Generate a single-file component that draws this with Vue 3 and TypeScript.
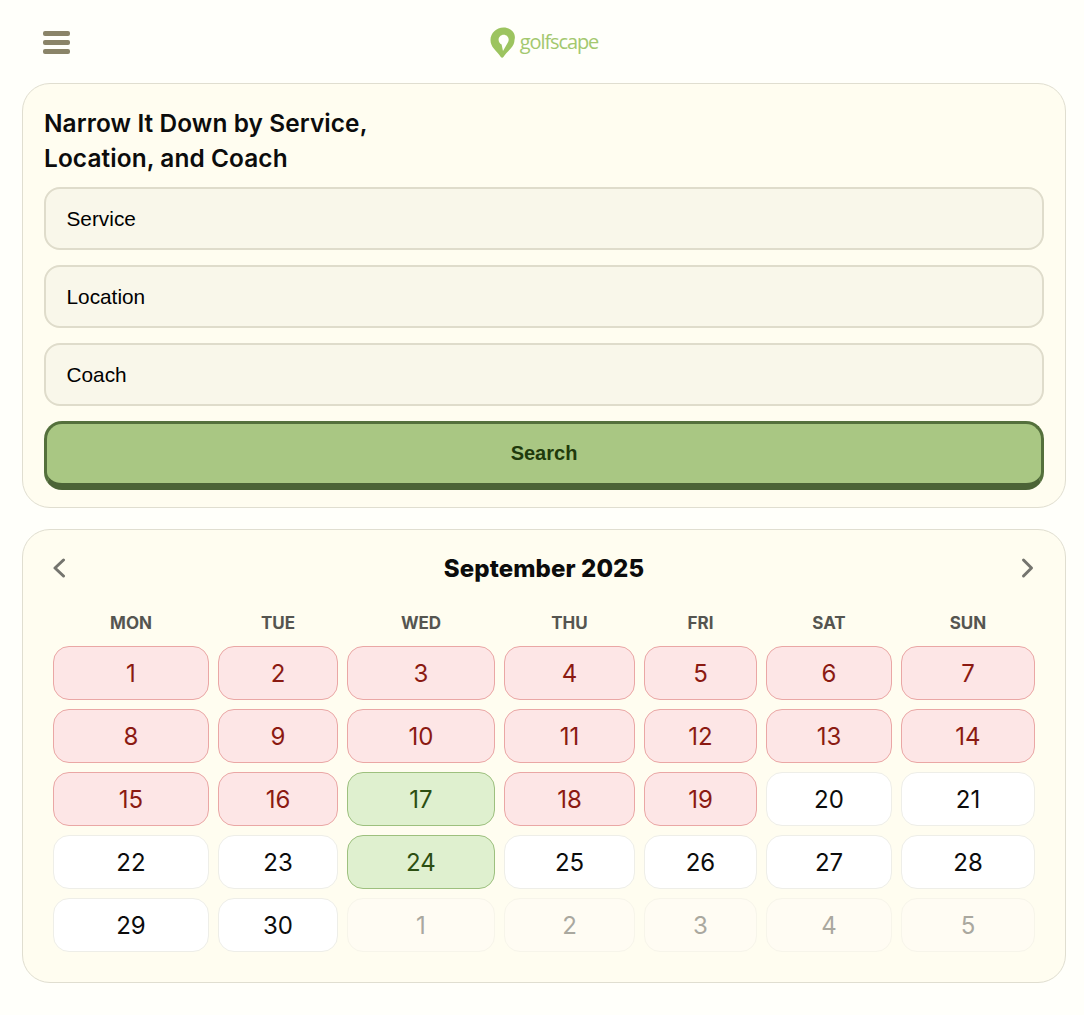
<template>
  <div class="page">
    <header class="topbar">
      <button class="menu" type="button" aria-label="Menu">
        <span></span><span></span><span></span>
      </button>
      <div class="logo">
        <svg class="logo__pin" viewBox="0 0 27 31" width="27" height="31" aria-hidden="true">
          <path
            fill="#9cc45f"
            fill-rule="evenodd"
            d="M13.500 0.500C6.300 0.500 0.500 6.100 0.500 13c0 3.300 1.300 6.100 3.300 8.600 2.500 3 5 5.300 7 8.300.7 1 2 1 2.600 0 2-3 4.700-5.500 7.300-8.500 2.400-2.700 3.800-5.200 3.800-8.400C26.500 6.100 20.700.5 13.500.5ZM13.700 7.800c2.800 0 5 2.200 5 4.900 0 .9-.3 1.800-.7 2.500l-5 8.800-1.400-6.600c-1.800-.8-3-2.600-3-4.700 0-2.700 2.300-4.900 5.100-4.900Z"
          />
        </svg>
        <span class="logo__text">golfscape</span>
      </div>
    </header>

    <section class="card filter">
      <h2 class="filter__title">Narrow It Down by Service,<br />Location, and Coach</h2>
      <div class="filter__fields">
        <div v-for="field in fields" :key="field" class="field">{{ field }}</div>
        <button class="search" type="button">Search</button>
      </div>
    </section>

    <section class="card calendar">
      <div class="calendar__head">
        <svg class="chevron" viewBox="0 0 14 24" width="14" height="24" aria-hidden="true">
          <path d="M10.500 4 2 12l8.500 8" />
        </svg>
        <h2 class="calendar__month">September 2025</h2>
        <svg class="chevron" viewBox="0 0 14 24" width="14" height="24" aria-hidden="true">
          <path d="m2.500 4 8 8-8 8" />
        </svg>
      </div>
      <div class="calendar__grid">
        <div v-for="day in weekdays" :key="day" class="weekday">{{ day }}</div>
        <div
          v-for="(cell, index) in cells"
          :key="index"
          class="day"
          :class="`day--${cell.state}`"
        >
          {{ cell.label }}
        </div>
      </div>
    </section>
  </div>
</template>

<script setup lang="ts">
type DayState = 'full' | 'open' | 'free' | 'muted'

interface DayCell {
  label: number
  state: DayState
}

const fields = ['Service', 'Location', 'Coach']
const weekdays = ['MON', 'TUE', 'WED', 'THU', 'FRI', 'SAT', 'SUN']

const openDays = [17, 24]

const cells: DayCell[] = [
  ...Array.from({ length: 30 }, (_, i): DayCell => {
    const label = i + 1
    if (openDays.includes(label)) return { label, state: 'open' }
    return { label, state: label < 20 ? 'full' : 'free' }
  }),
  ...[1, 2, 3, 4, 5].map((label): DayCell => ({ label, state: 'muted' })),
]
</script>

<style>
body {
  background: #fffffa;
}
</style>

<style scoped>
.page {
  box-sizing: border-box;
  width: 1084px;
  padding: 0 18px 32px 22px;
  font-family: Inter, "Liberation Sans", sans-serif;
  color: #0c0c0c;
}

.topbar {
  display: grid;
  grid-template-columns: 1fr auto 1fr;
  align-items: center;
  box-sizing: border-box;
  height: 83px;
  padding-top: 2px;
}

.menu {
  display: flex;
  flex-direction: column;
  gap: 4px;
  width: 27px;
  margin: 0 0 0 21px;
  padding: 0;
  border: 0;
  background: none;
}

.menu span {
  height: 5px;
  border-radius: 2px;
  background: #8a8468;
}

.logo {
  display: flex;
  align-items: center;
  gap: 3px;
  grid-column: 2;
}

.logo__pin {
  display: block;
}

.logo__text {
  margin-top: -2px;
  font-family: "Open Sans", sans-serif;
  font-size: 20px;
  letter-spacing: -1.1px;
  color: #a3c86f;
}

.card {
  box-sizing: border-box;
  width: 1044px;
  border: 1px solid #e0ded0;
  border-radius: 28px;
  background: #fffdf0;
}

.filter {
  padding: 22px 21px 17px;
}

.filter__title {
  margin: 0 0 11px;
  font-size: 24.4px;
  font-weight: 600;
  letter-spacing: 0.1px;
  line-height: 35px;
}

.filter__fields {
  display: flex;
  flex-direction: column;
  gap: 15px;
}

.field {
  box-sizing: border-box;
  height: 63px;
  padding: 0 20.5px;
  border: 2px solid #dfdccb;
  border-radius: 16px;
  background: #f9f7ea;
  font-family: "Liberation Sans", sans-serif;
  font-size: 20.8px;
  line-height: 59px;
  color: #000;
}

.search {
  box-sizing: border-box;
  height: 69px;
  border: 3px solid #54703c;
  border-bottom: 7px solid #4b6336;
  border-radius: 18px;
  background: #a9c783;
  font-family: "Liberation Sans", sans-serif;
  font-size: 20px;
  font-weight: 700;
  color: #1f3a0c;
}

.calendar {
  height: 454px;
  margin-top: 21px;
  padding: 21px 30px 0;
}

.calendar__head {
  display: flex;
  align-items: center;
  justify-content: space-between;
  height: 34px;
}

.chevron {
  fill: none;
  stroke: #74746e;
  stroke-width: 3;
  stroke-linecap: round;
  stroke-linejoin: round;
}

.calendar__month {
  margin: 0;
  font-size: 24px;
  font-weight: 800;
  letter-spacing: 0.1px;
}

.calendar__grid {
  display: grid;
  grid-template-columns: 156px 120px 148px 131px 113px 126px 134px;
  grid-template-rows: 31px;
  grid-auto-rows: 54px;
  gap: 9px;
  margin-top: 21px;
}

.weekday {
  display: flex;
  align-items: center;
  justify-content: center;
  padding-top: 2px;
  font-size: 17px;
  font-weight: 700;
  color: #555550;
}

.day {
  display: flex;
  align-items: center;
  justify-content: center;
  border: 1px solid;
  border-radius: 16px;
  font-size: 24px;
}

.day--full {
  border-color: #eaa7a5;
  background: #fde6e6;
  color: #8b1a12;
}

.day--open {
  border-color: #9dc07e;
  background: #dff0cf;
  color: #2c4f12;
}

.day--free {
  border-color: #eeeee8;
  background: #fff;
  color: #0c0c0c;
}

.day--muted {
  border-color: #f7f5ea;
  background: #fffcf3;
  color: #aaa89f;
}
</style>
